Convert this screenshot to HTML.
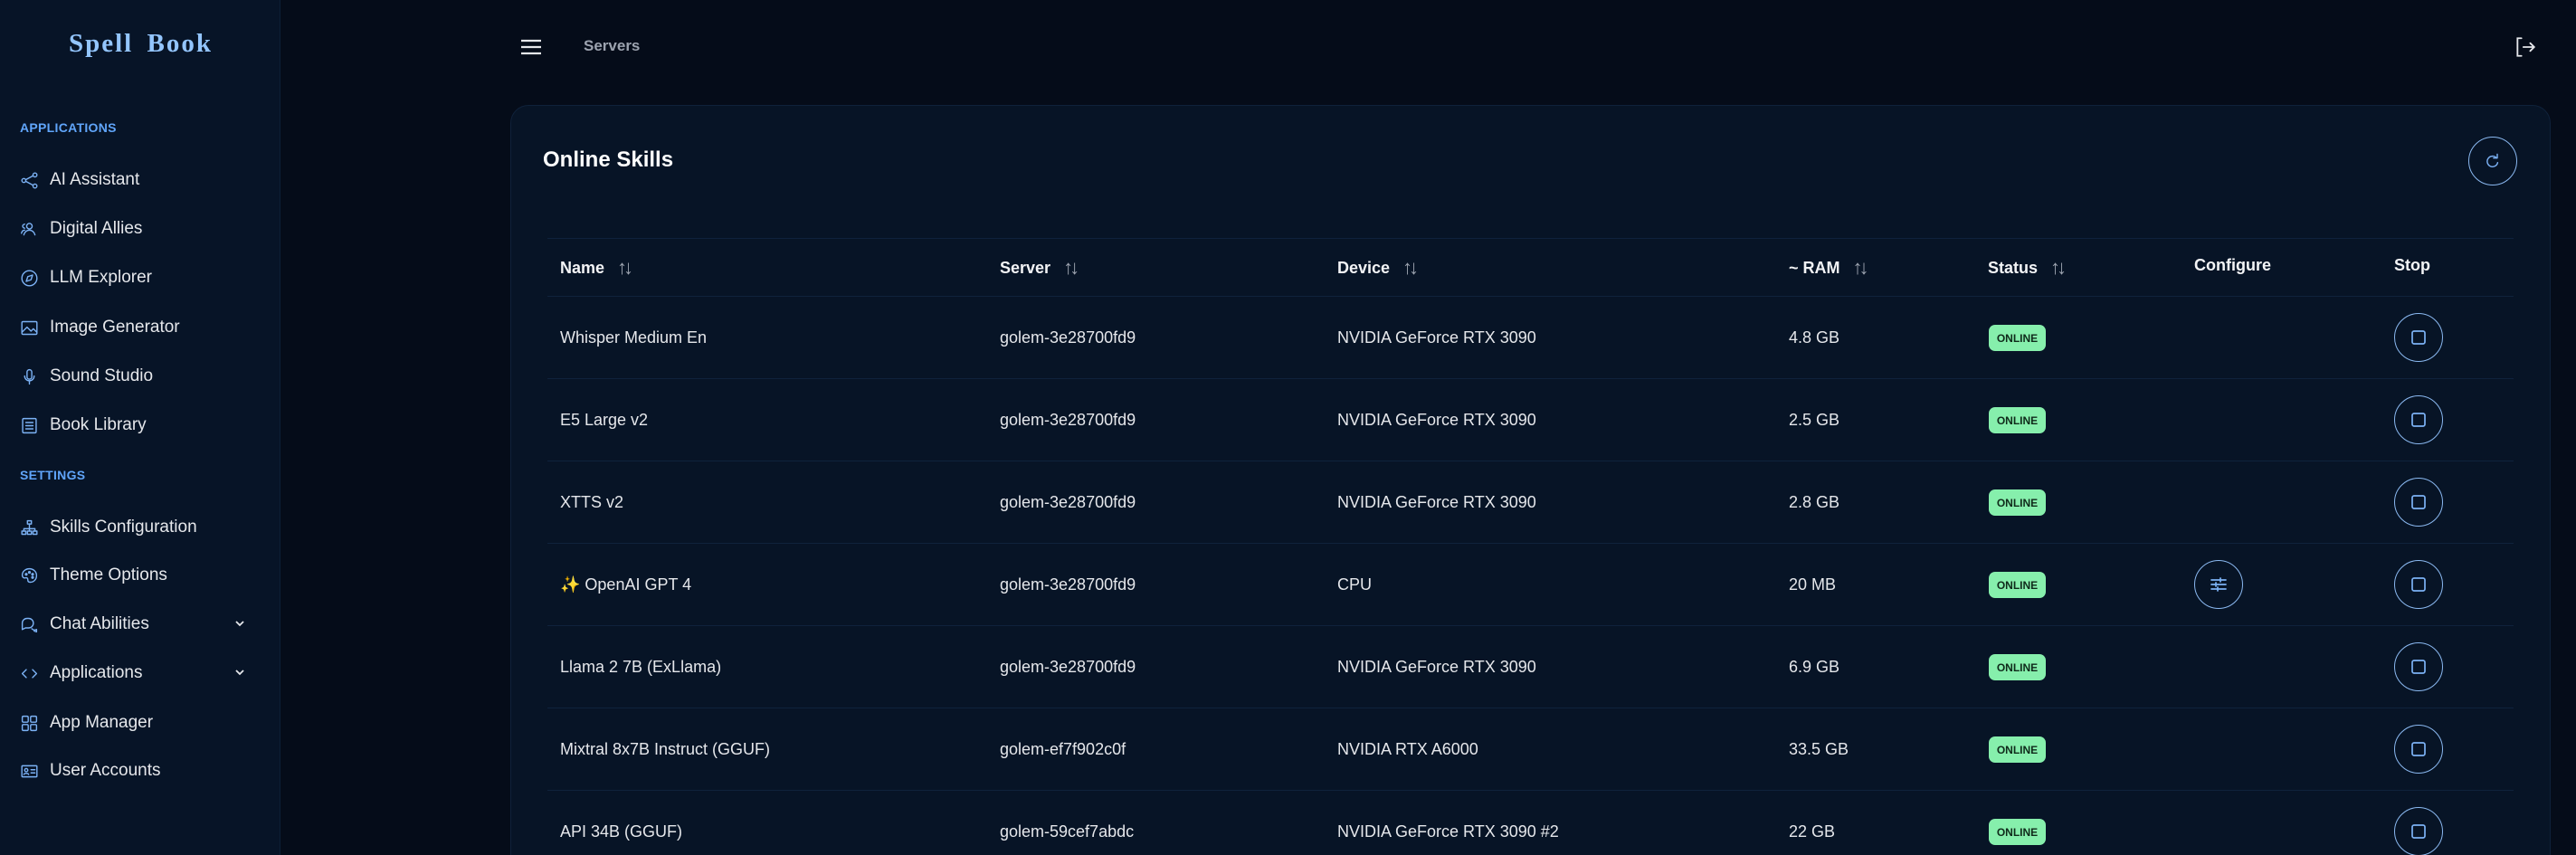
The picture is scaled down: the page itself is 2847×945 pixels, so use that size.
<!DOCTYPE html>
<html><head><meta charset="utf-8"><style>
*{box-sizing:border-box;margin:0;padding:0}
html,body{width:2847px;height:945px;overflow:hidden}
body{background:#050c19;font-family:"Liberation Sans",sans-serif;color:#e5e7eb;position:relative}
.side{position:absolute;left:0;top:0;width:310px;height:945px;background:#071427;border-right:1px solid #0d1f36}
.logo{position:absolute;left:76px;top:32px;font-family:"Liberation Serif",serif;font-weight:bold;font-size:29px;color:#93c5fd;letter-spacing:2px;word-spacing:6px}
.sec{position:absolute;left:22px;font-size:14px;font-weight:bold;color:#60a5fa;letter-spacing:.3px}
.it{position:absolute;left:22px;height:30px;display:flex;align-items:center;font-size:19px;color:#e5e7eb}
.it svg{width:21px;height:21px;margin-right:12px;stroke:#7cb2f5;fill:none;stroke-width:1.6;stroke-linecap:round;stroke-linejoin:round}
.chev{position:absolute;left:258px;width:14px;height:14px}
.card{position:absolute;left:564px;top:116px;width:2255px;height:829px;background:#071426;border:1px solid #0f213a;border-bottom:none;border-radius:20px 20px 0 0}
.title{position:absolute;left:600px;top:163px;font-size:24px;font-weight:bold;color:#fff}
.circ{position:absolute;width:54px;height:54px;border:1.5px solid #8ab8f0;border-radius:50%;display:flex;align-items:center;justify-content:center}
.circ svg{stroke:#7cb2f5;fill:none;stroke-width:1.7;stroke-linecap:round;stroke-linejoin:round}
.hl{position:absolute;left:605px;width:2173px;height:1px;background:#0f223c}
.th{position:absolute;top:283px;font-size:18px;font-weight:bold;color:#f3f4f6;display:flex;align-items:center}
.th .s{margin-left:14px;color:#9ca3af;font-weight:normal;font-size:22px;letter-spacing:-4px}
.td{position:absolute;font-size:18px;color:#e5e7eb;line-height:24px}
.badge{position:absolute;left:2198px;width:63px;height:29px;background:#86efac;border-radius:7px;color:#0f2a1a;font-size:12px;font-weight:bold;display:flex;align-items:center;justify-content:center}
</style></head><body>
<div class="side">
<div class="logo">Spell Book</div>
<div class="sec" style="top:133px">APPLICATIONS</div>
<div class="it" style="top:184px"><svg viewBox="0 0 24 24"><circle cx="5" cy="12" r="2.5"/><circle cx="19" cy="5" r="2.5"/><circle cx="19" cy="19" r="2.5"/><path d="M7.3 11l9.4-5M7.3 13l9.4 5"/></svg>AI Assistant</div>
<div class="it" style="top:238px"><svg viewBox="0 0 24 24"><circle cx="12" cy="8" r="3.5"/><path d="M5 19c1-4 4-6 7-6s6 2 7 6"/><path d="M2 17c.5-2.5 2-4 4-4M6 5.5a2.5 2.5 0 1 0 0 5"/></svg>Digital Allies</div>
<div class="it" style="top:292px"><svg viewBox="0 0 24 24"><circle cx="12" cy="12" r="9.5"/><path d="M16 8l-2 6-6 2 2-6z"/></svg>LLM Explorer</div>
<div class="it" style="top:347px"><svg viewBox="0 0 24 24"><rect x="2.5" y="4" width="19" height="16" rx="1.5"/><path d="M3 17l6-6 5 5 3-3 4 4"/></svg>Image Generator</div>
<div class="it" style="top:401px"><svg viewBox="0 0 24 24"><rect x="9" y="3" width="6" height="12" rx="3"/><path d="M6 11a6 6 0 0 0 12 0M12 17v4"/></svg>Sound Studio</div>
<div class="it" style="top:455px"><svg viewBox="0 0 24 24"><rect x="3.5" y="3" width="17" height="18" rx="1.5"/><path d="M7.5 8h9M7.5 12h9M7.5 16h9"/></svg>Book Library</div>
<div class="sec" style="top:517px">SETTINGS</div>
<div class="it" style="top:568px"><svg viewBox="0 0 24 24"><rect x="9.5" y="3" width="5" height="4"/><rect x="2.5" y="16" width="5" height="4"/><rect x="9.5" y="16" width="5" height="4"/><rect x="16.5" y="16" width="5" height="4"/><path d="M12 7v9M5 16v-3h14v3"/></svg>Skills Configuration</div>
<div class="it" style="top:621px"><svg viewBox="0 0 24 24"><path d="M12 3c-5 0-9 3.5-9 8 0 3 2 4 4 3.5s3 .5 3 2.5 1 3 3 3c4.5 0 8-3.5 8-8.5S17 3 12 3z"/><circle cx="8" cy="10" r="1"/><circle cx="12" cy="7.5" r="1"/><circle cx="16" cy="10" r="1"/><circle cx="16" cy="14" r="1"/></svg>Theme Options</div>
<div class="it" style="top:675px"><svg viewBox="0 0 24 24"><path d="M3 18V10a6 6 0 0 1 6-6h2a6 6 0 0 1 0 12H7z"/><path d="M15 17a5 5 0 0 0 6 1v3l-3-1"/></svg>Chat Abilities</div>
<svg class="chev" style="top:682px" viewBox="0 0 14 14"><path d="M3 5l4 4 4-4" stroke="#e5e7eb" stroke-width="1.8" fill="none"/></svg>
<div class="it" style="top:729px"><svg viewBox="0 0 24 24"><path d="M8 7l-5 5 5 5M16 7l5 5-5 5"/></svg>Applications</div>
<svg class="chev" style="top:736px" viewBox="0 0 14 14"><path d="M3 5l4 4 4-4" stroke="#e5e7eb" stroke-width="1.8" fill="none"/></svg>
<div class="it" style="top:784px"><svg viewBox="0 0 24 24"><rect x="3" y="3" width="7.5" height="7.5" rx="1.5"/><rect x="13.5" y="3" width="7.5" height="7.5" rx="1.5"/><rect x="3" y="13.5" width="7.5" height="7.5" rx="1.5"/><rect x="13.5" y="13.5" width="7.5" height="7.5" rx="1.5"/></svg>App Manager</div>
<div class="it" style="top:837px"><svg viewBox="0 0 24 24"><rect x="2.5" y="5" width="19" height="14" rx="1"/><circle cx="8" cy="10.5" r="2"/><path d="M5 16c.5-2 5.5-2 6 0M14 10h5M14 14h5"/></svg>User Accounts</div>
</div>

<svg style="position:absolute;left:575px;top:43px" width="24" height="18" viewBox="0 0 24 18"><path d="M1 2h22M1 9h22M1 16h22" stroke="#e5e7eb" stroke-width="2.2"/></svg>
<div style="position:absolute;left:645px;top:41px;font-size:17px;font-weight:bold;color:#9ca3af">Servers</div>
<svg style="position:absolute;left:2778px;top:39px" width="26" height="26" viewBox="0 0 24 24" fill="none" stroke="#e5e7eb" stroke-width="1.7" stroke-linecap="round"><path d="M8 3H4v18h4M10 12h11M17 8l4 4-4 4"/></svg>

<div class="card"></div>
<div class="title">Online Skills</div>
<div class="circ" style="left:2728px;top:151px"><svg width="20" height="20" viewBox="0 0 24 24"><path d="M17 8a7 7 0 1 0 1.5 6"/><path d="M18 3v5h-5"/></svg></div>

<div class="hl" style="top:263px"></div>
<div class="th" style="left:619px">Name<span class="s">↑↓</span></div>
<div class="th" style="left:1105px">Server<span class="s">↑↓</span></div>
<div class="th" style="left:1478px">Device<span class="s">↑↓</span></div>
<div class="th" style="left:1977px">~ RAM<span class="s">↑↓</span></div>
<div class="th" style="left:2197px">Status<span class="s">↑↓</span></div>
<div class="th" style="left:2425px">Configure</div>
<div class="th" style="left:2646px">Stop</div>
<div class="hl" style="top:327px"></div>
<div class="hl" style="top:418px"></div>
<div class="hl" style="top:509px"></div>
<div class="hl" style="top:600px"></div>
<div class="hl" style="top:691px"></div>
<div class="hl" style="top:782px"></div>
<div class="hl" style="top:873px"></div>

<div class="td" style="left:619px;top:361px">Whisper Medium En</div><div class="td" style="left:1105px;top:361px">golem-3e28700fd9</div><div class="td" style="left:1478px;top:361px">NVIDIA GeForce RTX 3090</div><div class="td" style="left:1977px;top:361px">4.8 GB</div>
<div class="td" style="left:619px;top:452px">E5 Large v2</div><div class="td" style="left:1105px;top:452px">golem-3e28700fd9</div><div class="td" style="left:1478px;top:452px">NVIDIA GeForce RTX 3090</div><div class="td" style="left:1977px;top:452px">2.5 GB</div>
<div class="td" style="left:619px;top:543px">XTTS v2</div><div class="td" style="left:1105px;top:543px">golem-3e28700fd9</div><div class="td" style="left:1478px;top:543px">NVIDIA GeForce RTX 3090</div><div class="td" style="left:1977px;top:543px">2.8 GB</div>
<div class="td" style="left:619px;top:634px"><span style="color:#facc15">✨</span> OpenAI GPT 4</div><div class="td" style="left:1105px;top:634px">golem-3e28700fd9</div><div class="td" style="left:1478px;top:634px">CPU</div><div class="td" style="left:1977px;top:634px">20 MB</div>
<div class="td" style="left:619px;top:725px">Llama 2 7B (ExLlama)</div><div class="td" style="left:1105px;top:725px">golem-3e28700fd9</div><div class="td" style="left:1478px;top:725px">NVIDIA GeForce RTX 3090</div><div class="td" style="left:1977px;top:725px">6.9 GB</div>
<div class="td" style="left:619px;top:816px">Mixtral 8x7B Instruct (GGUF)</div><div class="td" style="left:1105px;top:816px">golem-ef7f902c0f</div><div class="td" style="left:1478px;top:816px">NVIDIA RTX A6000</div><div class="td" style="left:1977px;top:816px">33.5 GB</div>
<div class="td" style="left:619px;top:907px">API 34B (GGUF)</div><div class="td" style="left:1105px;top:907px">golem-59cef7abdc</div><div class="td" style="left:1478px;top:907px">NVIDIA GeForce RTX 3090 #2</div><div class="td" style="left:1977px;top:907px">22 GB</div>

<div class="badge" style="top:359px">ONLINE</div>
<div class="badge" style="top:450px">ONLINE</div>
<div class="badge" style="top:541px">ONLINE</div>
<div class="badge" style="top:632px">ONLINE</div>
<div class="badge" style="top:723px">ONLINE</div>
<div class="badge" style="top:814px">ONLINE</div>
<div class="badge" style="top:905px">ONLINE</div>

<div class="circ" style="left:2646px;top:346px"><svg width="20" height="20" viewBox="0 0 20 20"><rect x="3" y="3" width="14" height="14" rx="2"/></svg></div>
<div class="circ" style="left:2646px;top:437px"><svg width="20" height="20" viewBox="0 0 20 20"><rect x="3" y="3" width="14" height="14" rx="2"/></svg></div>
<div class="circ" style="left:2646px;top:528px"><svg width="20" height="20" viewBox="0 0 20 20"><rect x="3" y="3" width="14" height="14" rx="2"/></svg></div>
<div class="circ" style="left:2646px;top:619px"><svg width="20" height="20" viewBox="0 0 20 20"><rect x="3" y="3" width="14" height="14" rx="2"/></svg></div>
<div class="circ" style="left:2646px;top:710px"><svg width="20" height="20" viewBox="0 0 20 20"><rect x="3" y="3" width="14" height="14" rx="2"/></svg></div>
<div class="circ" style="left:2646px;top:801px"><svg width="20" height="20" viewBox="0 0 20 20"><rect x="3" y="3" width="14" height="14" rx="2"/></svg></div>
<div class="circ" style="left:2646px;top:892px"><svg width="20" height="20" viewBox="0 0 20 20"><rect x="3" y="3" width="14" height="14" rx="2"/></svg></div>

<div class="circ" style="left:2425px;top:619px"><svg width="20" height="20" viewBox="0 0 20 20"><path d="M2 5h16M2 10h16M2 15h16M12 3v4M7 8v4M9 13v4"/></svg></div>
</body></html>
